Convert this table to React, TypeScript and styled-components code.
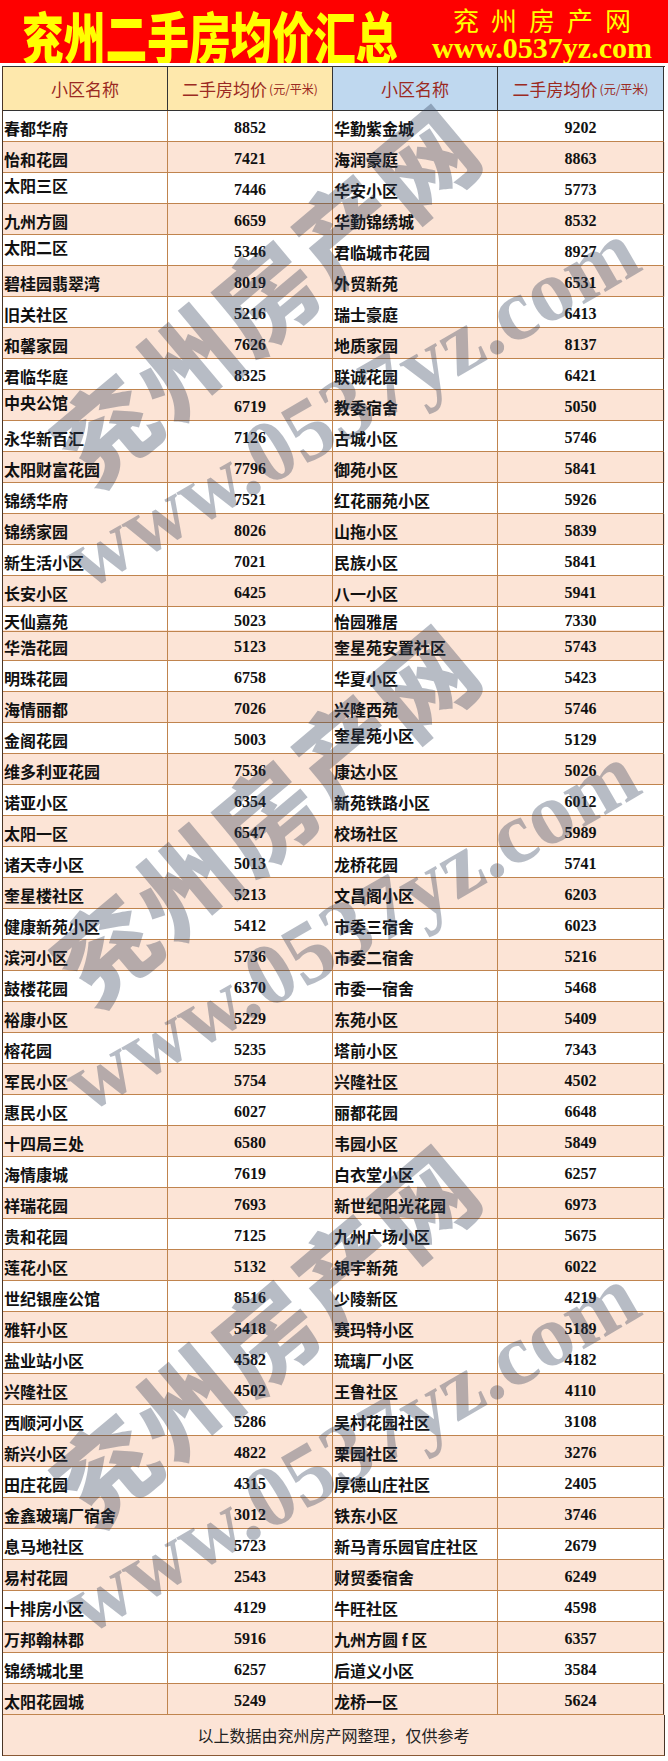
import React from 'react'
import styled, { createGlobalStyle } from 'styled-components'

const GlobalStyle = createGlobalStyle`
  html, body {
    margin: 0;
    padding: 0;
    background: #ffffff;
  }
  body {
    font-family: "Noto Sans CJK SC", "Noto Sans", sans-serif;
  }
`

// [left name, left price, right name, right price]
const rows: [string, string, string, string][] = [
  ['春都华府', '8852', '华勤紫金城', '9202'],
  ['怡和花园', '7421', '海润豪庭', '8863'],
  ['太阳三区', '7446', '华安小区', '5773'],
  ['九州方圆', '6659', '华勤锦绣城', '8532'],
  ['太阳二区', '5346', '君临城市花园', '8927'],
  ['碧桂园翡翠湾', '8019', '外贸新苑', '6531'],
  ['旧关社区', '5216', '瑞士豪庭', '6413'],
  ['和馨家园', '7626', '地质家园', '8137'],
  ['君临华庭', '8325', '联诚花园', '6421'],
  ['中央公馆', '6719', '教委宿舍', '5050'],
  ['永华新百汇', '7126', '古城小区', '5746'],
  ['太阳财富花园', '7796', '御苑小区', '5841'],
  ['锦绣华府', '7521', '红花丽苑小区', '5926'],
  ['锦绣家园', '8026', '山拖小区', '5839'],
  ['新生活小区', '7021', '民族小区', '5841'],
  ['长安小区', '6425', '八一小区', '5941'],
  ['天仙嘉苑', '5023', '怡园雅居', '7330'],
  ['华浩花园', '5123', '奎星苑安置社区', '5743'],
  ['明珠花园', '6758', '华夏小区', '5423'],
  ['海情丽都', '7026', '兴隆西苑', '5746'],
  ['金阁花园', '5003', '奎星苑小区', '5129'],
  ['维多利亚花园', '7536', '康达小区', '5026'],
  ['诺亚小区', '6354', '新苑铁路小区', '6012'],
  ['太阳一区', '6547', '校场社区', '5989'],
  ['诸天寺小区', '5013', '龙桥花园', '5741'],
  ['奎星楼社区', '5213', '文昌阁小区', '6203'],
  ['健康新苑小区', '5412', '市委三宿舍', '6023'],
  ['滨河小区', '5736', '市委二宿舍', '5216'],
  ['鼓楼花园', '6370', '市委一宿舍', '5468'],
  ['裕康小区', '5229', '东苑小区', '5409'],
  ['榕花园', '5235', '塔前小区', '7343'],
  ['军民小区', '5754', '兴隆社区', '4502'],
  ['惠民小区', '6027', '丽都花园', '6648'],
  ['十四局三处', '6580', '韦园小区', '5849'],
  ['海情康城', '7619', '白衣堂小区', '6257'],
  ['祥瑞花园', '7693', '新世纪阳光花园', '6973'],
  ['贵和花园', '7125', '九州广场小区', '5675'],
  ['莲花小区', '5132', '银宇新苑', '6022'],
  ['世纪银座公馆', '8516', '少陵新区', '4219'],
  ['雅轩小区', '5418', '赛玛特小区', '5189'],
  ['盐业站小区', '4582', '琉璃厂小区', '4182'],
  ['兴隆社区', '4502', '王鲁社区', '4110'],
  ['西顺河小区', '5286', '吴村花园社区', '3108'],
  ['新兴小区', '4822', '栗园社区', '3276'],
  ['田庄花园', '4315', '厚德山庄社区', '2405'],
  ['金鑫玻璃厂宿舍', '3012', '铁东小区', '3746'],
  ['息马地社区', '5723', '新马青乐园官庄社区', '2679'],
  ['易村花园', '2543', '财贸委宿舍', '6249'],
  ['十排房小区', '4129', '牛旺社区', '4598'],
  ['万邦翰林郡', '5916', '九州方圆 f 区', '6357'],
  ['锦绣城北里', '6257', '后道义小区', '3584'],
  ['太阳花园城', '5249', '龙桥一区', '5624'],
]

// rows whose name sits at the top of the cell in the sheet
const liftedLeft = new Set([2, 4, 9])
const liftedRight = new Set([20])
const shortRow = 16

// watermark centres, repeated down the sheet
const marks = [
  { name: 292, url: 405 },
  { name: 812, url: 928 },
  { name: 1332, url: 1450 },
]

const Page = styled.div`
  position: relative;
  width: 668px;
  min-height: 1761px;
  overflow: hidden;
  background: #ffffff;
`

const Banner = styled.header`
  height: 63px;
  background: #fe0000;
  display: flex;
  align-items: flex-start;
  padding: 7px 0 0 22px;
  box-sizing: border-box;
  overflow: hidden;
`

// condensed headline: the box keeps its natural width and the
// negative margin gives back what the horizontal squeeze removes
const Title = styled.h1`
  flex: 0 0 504px;
  margin: 0 -128px 0 0;
  font: 900 56px/56px "Noto Sans CJK SC", sans-serif;
  color: #ffff00;
  white-space: nowrap;
  transform: scaleX(0.745);
  transform-origin: left top;
`

const Brand = styled.div`
  flex: 0 0 224px;
  margin-left: 32px;
  display: flex;
  flex-direction: column;
  align-items: center;
  color: #ffff00;
`

const BrandName = styled.div`
  font: 400 26px/26px "Noto Sans CJK SC", sans-serif;
  letter-spacing: 12px;
  padding-left: 12px;
`

const BrandUrl = styled.div`
  font: bold 30px/29px "Liberation Serif", serif;
  white-space: nowrap;
`

const Table = styled.section`
  margin: 3px 0 0 2px;
  width: 662px;
  border-left: 1px solid #4a3526;
  border-top: 1px solid #333333;
`

const Line = styled.div<{ $shade?: boolean; $short?: boolean }>`
  display: grid;
  grid-template-columns: 165px 165px 165px 166px;
  height: ${({ $short }) => ($short ? 23 : 31)}px;
  background: ${({ $shade }) => ($shade ? '#fce4d6' : '#ffffff')};
`

const HeadLine = styled(Line)`
  height: 44px;
`

const HeadCell = styled.div<{ $tone: 'gold' | 'blue' }>`
  display: flex;
  align-items: center;
  justify-content: center;
  background: ${({ $tone }) => ($tone === 'gold' ? '#fee8ac' : '#bfd8ef')};
  border-right: 1px solid #333333;
  border-bottom: 1px solid #333333;
  color: #9b2a22;
  font: 400 17px/1 "Noto Sans CJK SC", sans-serif;
  white-space: nowrap;

  small {
    font-size: 12px;
    margin-left: 2px;
  }
`

const NameCell = styled.div<{ $lift?: boolean }>`
  display: flex;
  align-items: ${({ $lift }) => ($lift ? 'flex-start' : 'center')};
  padding: ${({ $lift }) => ($lift ? '2px 0 0 1px' : '3px 0 0 1px')};
  border-right: 1px solid #c0844e;
  border-bottom: 1px solid #c0844e;
  font: 700 16px/20px "Noto Sans CJK SC", sans-serif;
  color: #111111;
  white-space: nowrap;
  overflow: hidden;
`

const PriceCell = styled.div<{ $edge?: boolean }>`
  display: flex;
  align-items: center;
  justify-content: center;
  padding-top: 4px;
  border-right: 1px solid ${({ $edge }) => ($edge ? '#4a3526' : '#c0844e')};
  border-bottom: 1px solid #c0844e;
  font: bold 16px/20px "Liberation Serif", serif;
  color: #111111;
`

const Footer = styled.div`
  height: 40px;
  display: flex;
  align-items: center;
  justify-content: center;
  background: #fce4d6;
  border-right: 1px solid #4a3526;
  border-bottom: 1px solid #8a5a36;
  font: 400 16px/1 "Noto Sans CJK SC", sans-serif;
  color: #222222;
`

const MarkText = styled.div<{ $x: number; $y: number; $angle: number }>`
  position: absolute;
  left: ${({ $x }) => $x}px;
  top: ${({ $y }) => $y}px;
  transform: translate(-50%, -50%) rotate(${({ $angle }) => $angle}deg);
  color: rgba(45, 60, 85, 0.34);
  white-space: nowrap;
  pointer-events: none;
`

const MarkName = styled(MarkText)`
  font: 900 100px/1 "Noto Sans CJK SC", sans-serif;
  letter-spacing: 4px;
`

const MarkUrl = styled(MarkText)`
  font: bold 88px/1 "Liberation Serif", serif;
`

export default function App() {
  return (
    <Page>
      <GlobalStyle />
      <Banner>
        <Title>兖州二手房均价汇总</Title>
        <Brand>
          <BrandName>兖州房产网</BrandName>
          <BrandUrl>www.0537yz.com</BrandUrl>
        </Brand>
      </Banner>

      <Table>
        <HeadLine>
          <HeadCell $tone="gold">小区名称</HeadCell>
          <HeadCell $tone="gold">
            二手房均价<small>(元/平米)</small>
          </HeadCell>
          <HeadCell $tone="blue">小区名称</HeadCell>
          <HeadCell $tone="blue">
            二手房均价<small>(元/平米)</small>
          </HeadCell>
        </HeadLine>

        {rows.map(([a, ap, b, bp], i) => (
          <Line key={a + i} $shade={i % 2 === 1} $short={i === shortRow}>
            <NameCell $lift={liftedLeft.has(i)}>{a}</NameCell>
            <PriceCell>{ap}</PriceCell>
            <NameCell $lift={liftedRight.has(i)}>{b}</NameCell>
            <PriceCell $edge>{bp}</PriceCell>
          </Line>
        ))}

        <Footer>以上数据由兖州房产网整理，仅供参考</Footer>
      </Table>

      {marks.map((m) => (
        <React.Fragment key={m.name}>
          <MarkName $x={264} $y={m.name} $angle={-40}>
            兖州房产网
          </MarkName>
          <MarkUrl $x={351} $y={m.url} $angle={-30}>
            www.0537yz.com
          </MarkUrl>
        </React.Fragment>
      ))}
    </Page>
  )
}
